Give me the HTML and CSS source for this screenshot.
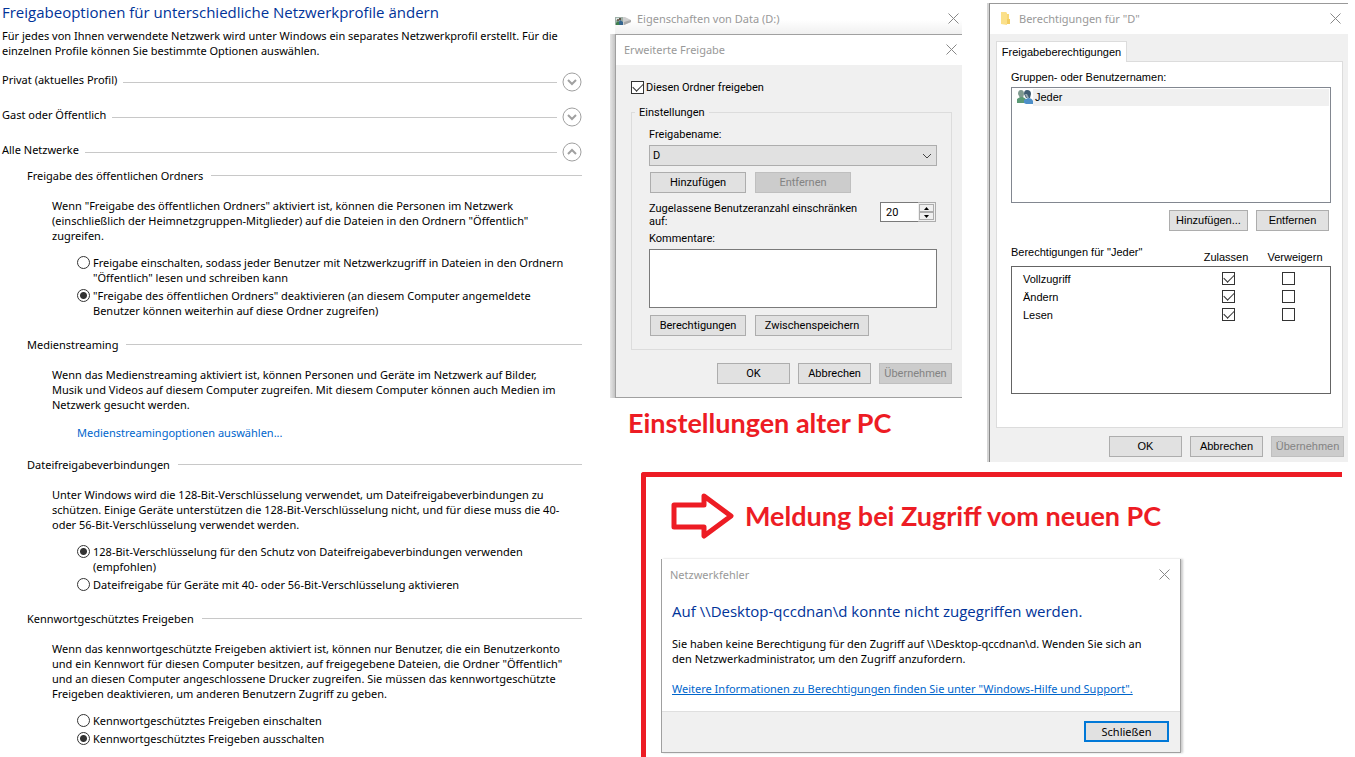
FILE: index.html
```html
<!DOCTYPE html>
<html lang="de">
<head>
  <meta charset="UTF-8">
  <meta name="viewport" content="width=device-width, initial-scale=1.0">
  <title>Netzwerkfreigabe</title>
  <link rel="stylesheet" href="styles.css">
</head>
<body>
  <main class="settings">
    <h1>Freigabeoptionen für unterschiedliche Netzwerkprofile ändern</h1>
    <p class="intro">Für jedes von Ihnen verwendete Netzwerk wird unter Windows ein separates Netzwerkprofil erstellt. Für die<br>einzelnen Profile können Sie bestimmte Optionen auswählen.</p>

    <div class="profile">
      <span>Privat (aktuelles Profil)</span>
      <button class="toggle" aria-label="Privat einblenden"><svg viewBox="0 0 20 20"><circle cx="10" cy="10" r="9"/><path d="M6 8l4 4 4-4"/></svg></button>
    </div>
    <div class="profile">
      <span>Gast oder Öffentlich</span>
      <button class="toggle" aria-label="Gast einblenden"><svg viewBox="0 0 20 20"><circle cx="10" cy="10" r="9"/><path d="M6 8l4 4 4-4"/></svg></button>
    </div>
    <div class="profile">
      <span>Alle Netzwerke</span>
      <button class="toggle" aria-label="Alle Netzwerke ausblenden"><svg viewBox="0 0 20 20"><circle cx="10" cy="10" r="9"/><path d="M6 12l4-4 4 4"/></svg></button>
    </div>

    <section class="option-group">
      <h2>Freigabe des öffentlichen Ordners</h2>
      <p>Wenn "Freigabe des öffentlichen Ordners" aktiviert ist, können die Personen im Netzwerk<br>(einschließlich der Heimnetzgruppen-Mitglieder) auf die Dateien in den Ordnern "Öffentlich"<br>zugreifen.</p>
      <div class="choices">
        <label><input type="radio" name="folder"><span>Freigabe einschalten, sodass jeder Benutzer mit Netzwerkzugriff in Dateien in den Ordnern<br>"Öffentlich" lesen und schreiben kann</span></label>
        <label><input type="radio" name="folder" checked><span>"Freigabe des öffentlichen Ordners" deaktivieren (an diesem Computer angemeldete<br>Benutzer können weiterhin auf diese Ordner zugreifen)</span></label>
      </div>
    </section>

    <section class="option-group">
      <h2>Medienstreaming</h2>
      <p>Wenn das Medienstreaming aktiviert ist, können Personen und Geräte im Netzwerk auf Bilder,<br>Musik und Videos auf diesem Computer zugreifen. Mit diesem Computer können auch Medien im<br>Netzwerk gesucht werden.</p>
      <a class="media-link" href="#">Medienstreamingoptionen auswählen...</a>
    </section>

    <section class="option-group">
      <h2>Dateifreigabeverbindungen</h2>
      <p>Unter Windows wird die 128-Bit-Verschlüsselung verwendet, um Dateifreigabeverbindungen zu<br>schützen. Einige Geräte unterstützen die 128-Bit-Verschlüsselung nicht, und für diese muss die 40-<br>oder 56-Bit-Verschlüsselung verwendet werden.</p>
      <div class="choices">
        <label><input type="radio" name="crypt" checked><span>128-Bit-Verschlüsselung für den Schutz von Dateifreigabeverbindungen verwenden<br>(empfohlen)</span></label>
        <label><input type="radio" name="crypt"><span>Dateifreigabe für Geräte mit 40- oder 56-Bit-Verschlüsselung aktivieren</span></label>
      </div>
    </section>

    <section class="option-group">
      <h2>Kennwortgeschütztes Freigeben</h2>
      <p>Wenn das kennwortgeschützte Freigeben aktiviert ist, können nur Benutzer, die ein Benutzerkonto<br>und ein Kennwort für diesen Computer besitzen, auf freigegebene Dateien, die Ordner "Öffentlich"<br>und an diesen Computer angeschlossene Drucker zugreifen. Sie müssen das kennwortgeschützte<br>Freigeben deaktivieren, um anderen Benutzern Zugriff zu geben.</p>
      <div class="choices">
        <label><input type="radio" name="password"><span>Kennwortgeschütztes Freigeben einschalten</span></label>
        <label><input type="radio" name="password" checked><span>Kennwortgeschütztes Freigeben ausschalten</span></label>
      </div>
    </section>
  </main>

  <div class="right">
    <div class="dialogs">
      <div class="old-pc">
        <div class="properties">
          <header class="titlebar">
            <svg class="drive-icon" viewBox="0 0 16 10"><path d="M6 1l4 0 6 3v2l-7 3H6z" fill="#cfcfcf"/><path d="M9 6l7-2v2l-7 3z" fill="#a9a9a9"/><path d="M0 1h8v8H0z" fill="#9fb0a8"/><path d="M1 2h3v2H1z" fill="#dbe6e4"/><circle cx="3" cy="4" r="1" fill="#5d4a38"/><path d="M1 9V7l2-2 2 2v2z" fill="#3f8050"/><circle cx="5" cy="3" r="1" fill="#4a3a2e"/><path d="M4 8V6l1-2 3 2v3H5z" fill="#35658f"/></svg>
            <span>Eigenschaften von Data (D:)</span>
            <button class="close" aria-label="Schließen"><svg viewBox="0 0 11 11"><path d="M0.500 0.500l10 10M10.500 0.500l-10 10"/></svg></button>
          </header>
          <div class="sharing">
            <header class="titlebar">
              <span>Erweiterte Freigabe</span>
              <button class="close" aria-label="Schließen"><svg viewBox="0 0 11 11"><path d="M0.500 0.500l10 10M10.500 0.500l-10 10"/></svg></button>
            </header>
            <div class="sharing-body">
              <label class="share-check"><input type="checkbox" checked>Diesen Ordner freigeben</label>
              <fieldset>
                <legend>Einstellungen</legend>
                <label for="share-name">Freigabename:</label>
                <select id="share-name"><option>D</option></select>
                <div class="button-row">
                  <button>Hinzufügen</button>
                  <button disabled>Entfernen</button>
                </div>
                <div class="limit">
                  <label for="user-limit">Zugelassene Benutzeranzahl einschränken<br>auf:</label>
                  <div class="spinner">
                    <input id="user-limit" type="text" value="20">
                    <div class="spin-buttons">
                      <button aria-label="Mehr"><svg viewBox="0 0 5 3"><path d="M0 3h5L2.500 0z"/></svg></button>
                      <button aria-label="Weniger"><svg viewBox="0 0 5 3"><path d="M0 0h5L2.500 3z"/></svg></button>
                    </div>
                  </div>
                </div>
                <label for="comments">Kommentare:</label>
                <textarea id="comments"></textarea>
                <div class="button-row">
                  <button>Berechtigungen</button>
                  <button class="wide">Zwischenspeichern</button>
                </div>
              </fieldset>
              <div class="dialog-buttons">
                <button>OK</button>
                <button>Abbrechen</button>
                <button disabled>Übernehmen</button>
              </div>
            </div>
          </div>
        </div>
        <p class="caption">Einstellungen alter PC</p>
      </div>

      <div class="permissions">
        <header class="titlebar">
          <svg class="folder-icon" viewBox="0 0 10 13"><path d="M0 0h5l1 1v12l-6-1z" fill="#fbe08a"/><path d="M6 7h3v5H6z" fill="#f3cd62"/><path d="M6 2h2v5H6z" fill="#f8d877"/></svg>
          <span>Berechtigungen für "D"</span>
          <button class="close" aria-label="Schließen"><svg viewBox="0 0 11 11"><path d="M0.500 0.500l10 10M10.500 0.500l-10 10"/></svg></button>
        </header>
        <div class="permissions-body">
          <button class="tab">Freigabeberechtigungen</button>
          <div class="tab-panel">
            <div class="list-label">Gruppen- oder Benutzernamen:</div>
            <ul class="user-list">
              <li>
                <svg class="users-icon" viewBox="0 0 16 14"><path d="M1 4q0-4 3-4t3 4l-1 4H3z" fill="#7f9a90"/><path d="M0 13V9q2-2 5-2 4 1 4 3v3z" fill="#5b9a76"/><path d="M7 4q0-4 3-4 4 0 4 4l-1 4H9z" fill="#3f5c72"/><path d="M8 4h2l2 4h-2z" fill="#9aaab2"/><path d="M7 13v-3l4-2q4 0 5 3v3H9z" fill="#4d8fc8"/></svg>
                <span>Jeder</span>
              </li>
            </ul>
            <div class="list-buttons">
              <button class="add">Hinzufügen...</button>
              <button>Entfernen</button>
            </div>
            <table>
              <thead>
                <tr><th>Berechtigungen für "Jeder"</th><th>Zulassen</th><th>Verweigern</th></tr>
              </thead>
              <tbody>
                <tr><td>Vollzugriff</td><td><input type="checkbox" checked aria-label="Vollzugriff zulassen"></td><td><input type="checkbox" aria-label="Vollzugriff verweigern"></td></tr>
                <tr><td>Ändern</td><td><input type="checkbox" checked aria-label="Ändern zulassen"></td><td><input type="checkbox" aria-label="Ändern verweigern"></td></tr>
                <tr><td>Lesen</td><td><input type="checkbox" checked aria-label="Lesen zulassen"></td><td><input type="checkbox" aria-label="Lesen verweigern"></td></tr>
              </tbody>
            </table>
          </div>
          <div class="dialog-buttons">
            <button>OK</button>
            <button>Abbrechen</button>
            <button disabled>Übernehmen</button>
          </div>
        </div>
      </div>
    </div>

    <div class="new-pc">
      <div class="message-title">
        <svg class="arrow" viewBox="0 0 64 48"><path d="M3 13h30V4l27 20-27 20v-9H3z"/></svg>
        <p class="caption">Meldung bei Zugriff vom neuen PC</p>
      </div>
      <div class="error">
        <header class="titlebar">
          <span>Netzwerkfehler</span>
          <button class="close" aria-label="Schließen"><svg viewBox="0 0 11 11"><path d="M0.500 0.500l10 10M10.500 0.500l-10 10"/></svg></button>
        </header>
        <div class="error-body">
          <h2>Auf \\Desktop-qccdnan\d konnte nicht zugegriffen werden.</h2>
          <p>Sie haben keine Berechtigung für den Zugriff auf \\Desktop-qccdnan\d. Wenden Sie sich an<br>den Netzwerkadministrator, um den Zugriff anzufordern.</p>
          <a href="#">Weitere Informationen zu Berechtigungen finden Sie unter "Windows-Hilfe und Support".</a>
        </div>
        <footer>
          <button>Schließen</button>
        </footer>
      </div>
    </div>
  </div>
</body>
</html>
```
FILE: styles.css
```css
* {
  box-sizing: border-box;
}

body {
  margin: 0;
  min-height: 100vh;
  display: grid;
  grid-template-columns: minmax(0, 610fr) minmax(0, 745fr);
  overflow: hidden;
  background-color: white;
  color: black;
  font-family: "Noto Sans", "Open Sans", sans-serif;
  font-size: 11px;
  line-height: 15px;
  white-space: nowrap;
}

h1, h2, p, ul {
  margin: 0;
  padding: 0;
  font-weight: normal;
}

button, input, select, textarea {
  margin: 0;
  padding: 0;
  font: inherit;
  color: inherit;
  border-radius: 0;
}

button {
  height: 21px;
  border: 1px solid #adadad;
  background-color: #e1e1e1;
}

button:disabled {
  border-color: #bfbfbf;
  background-color: #cccccc;
  color: #838383;
}

/* left side: network profiles */
.settings {
  padding: 2px 28px 0 2px;
}

.settings h1 {
  color: #003399;
  font-family: "Open Sans", sans-serif;
  font-size: 15px;
  line-height: 20px;
}

.intro {
  margin-top: 6px;
  margin-bottom: 14px;
}

.profile {
  display: flex;
  align-items: center;
  height: 20px;
  margin-bottom: 15px;
}

.profile span {
  padding-bottom: 5px;
}

.profile::before {
  content: "";
  order: 1;
  flex: 1;
  height: 1px;
  margin: 0 5px 0 6px;
  background-color: #c8c8c8;
}

.toggle {
  order: 2;
  width: 20px;
  height: 20px;
  border: none;
  background: none;
}

.toggle svg {
  display: block;
  fill: none;
  stroke: #a0a0a0;
}

.toggle path {
  stroke-width: 2;
}

.option-group {
  padding: 0 0 19px 25px;
}

.profile + .option-group {
  margin-top: -9px;
}

.option-group h2 {
  display: flex;
  align-items: center;
  font-size: 11px;
  line-height: 15px;
}

.option-group h2::after {
  content: "";
  flex: 1;
  height: 1px;
  margin-left: 8px;
  background-color: #c8c8c8;
}

.option-group p {
  margin: 15px 0 0 25px;
}

.choices {
  display: flex;
  flex-direction: column;
  gap: 3px;
  margin: 12px 0 0 50px;
}

.choices label {
  display: flex;
  align-items: flex-start;
  gap: 3px;
}

input[type="radio"] {
  appearance: none;
  flex: none;
  width: 13px;
  height: 13px;
  margin-top: 1px;
  border: 1px solid #333333;
  border-radius: 50%;
  background-color: white;
}

input[type="radio"]:checked {
  background-image: radial-gradient(circle, #333333 3px, transparent 4px);
}

.media-link {
  display: block;
  margin: 13px 0 -2px 50px;
  color: #0066cc;
  text-decoration: none;
}

/* right side */
.right {
  display: flex;
  flex-direction: column;
}

.dialogs {
  display: grid;
  grid-template-columns: minmax(0, 352fr) minmax(0, 361fr);
  gap: 25px;
  padding-right: 7px;
  height: 472px;
}

.titlebar {
  display: flex;
  align-items: center;
  background-color: white;
  color: #999999;
}

.close {
  width: 11px;
  height: 11px;
  margin-left: auto;
  border: none;
  background: none;
}

.close svg {
  display: block;
  fill: none;
  stroke: #888888;
}

.properties {
  padding-left: 5px;
  background: linear-gradient(to right, #e6e6e6, #c4c4c4) no-repeat left bottom / 5px 364px;
}

.properties > .titlebar {
  height: 34px;
  padding: 3px 3px 0 0;
  background: linear-gradient(white 20px, #f0f0f0);
}

.drive-icon {
  width: 16px;
  height: 10px;
  margin: 5px 6px 0 0;
}

.sharing {
  border: 1px solid #a0a0a0;
  border-right: none;
  background-color: #f0f0f0;
}

.sharing > .titlebar {
  height: 30px;
  padding: 0 5px 2px 8px;
}

.sharing-body {
  padding: 16px 10px 13px 15px;
  font-family: Roboto, sans-serif;
  line-height: 13px;
}

input[type="checkbox"] {
  appearance: none;
  flex: none;
  position: relative;
  width: 13px;
  height: 13px;
  border: 1px solid #333333;
  background-color: white;
}

input[type="checkbox"]:checked::after {
  content: "";
  position: absolute;
  left: 1px;
  top: 1px;
  width: 9px;
  height: 5px;
  border: solid #333333;
  border-width: 0 0 1px 1px;
  transform: rotate(-45deg);
}

.share-check {
  display: flex;
  gap: 2px;
  margin-bottom: 12px;
}

fieldset {
  margin: 0;
  padding: 9px 14px 13px 17px;
  border: 1px solid #dcdcdc;
}

legend {
  padding: 0 4px;
  margin-left: -14px;
}

fieldset label {
  display: block;
}

fieldset select {
  appearance: none;
  display: block;
  width: 100%;
  height: 21px;
  margin: 4px 0 6px;
  padding-left: 3px;
  border: 1px solid #adadad;
  background: #e1e1e1 url("data:image/svg+xml,%3Csvg xmlns='http://www.w3.org/2000/svg' width='9' height='6'%3E%3Cpath d='M0 1l4 4 4-4' fill='none' stroke='%23444'/%3E%3C/svg%3E") no-repeat right 4px center;
}

.button-row {
  display: flex;
  gap: 9px;
  padding-left: 1px;
}

.button-row button {
  width: 96px;
}

.button-row .wide {
  width: 114px;
}

.limit {
  display: flex;
  justify-content: space-between;
  align-items: flex-start;
  padding: 9px 1px 4px 0;
}

.spinner {
  display: flex;
  width: 56px;
  height: 20px;
}

.spinner input {
  width: 38px;
  padding-left: 5px;
  border: 1px solid #7a7a7a;
  border-right: none;
}

.spin-buttons {
  display: flex;
  flex: 1;
  flex-direction: column;
  padding: 1px;
  border: 1px solid #adadad;
  border-left: none;
}

.spin-buttons button {
  display: flex;
  flex: 1;
  align-items: center;
  justify-content: center;
  height: auto;
  background-color: #f0f0f0;
}

.spin-buttons svg {
  width: 5px;
  height: 3px;
}

textarea {
  display: block;
  width: 100%;
  height: 59px;
  margin: 4px 0 7px;
  border: 1px solid #7a7a7a;
  resize: none;
}

.dialog-buttons {
  display: flex;
  justify-content: flex-end;
  gap: 8px;
  margin-top: 13px;
}

.dialog-buttons button {
  width: 73px;
}

.caption {
  color: #ed1c24;
  font-family: Lato, sans-serif;
  font-size: 27px;
  font-weight: bold;
  line-height: 32px;
}

.old-pc .caption {
  margin: 9px 0 0 18px;
}

/* permissions window */
.permissions {
  align-self: start;
  margin: 3px 0 0 2px;
  border-top: 1px solid #999999;
  border-left: 1px solid #888888;
  background-color: #f0f0f0;
  box-shadow: -2px 0 #d4d4d4;
}

.permissions .titlebar {
  height: 30px;
  padding: 0 7px 1px 11px;
}

.folder-icon {
  width: 10px;
  height: 13px;
  margin-right: 8px;
}

.permissions-body {
  padding: 7px 4px 5px 6px;
  font-family: "Liberation Sans", Arial, sans-serif;
  line-height: 13px;
}

.tab {
  display: block;
  position: relative;
  width: 131px;
  height: 21px;
  margin-bottom: -1px;
  border: 1px solid #dcdcdc;
  border-bottom: none;
  background-color: white;
}

.tab-panel {
  height: 367px;
  margin-right: 1px;
  padding: 9px 11px 0 14px;
  border: 1px solid #dcdcdc;
  background-color: white;
}

.user-list {
  height: 116px;
  margin-top: 3px;
  padding: 1px;
  border: 1px solid #828790;
  list-style: none;
}

.user-list li {
  display: flex;
  padding-left: 4px;
}

.user-list span {
  flex: 1;
  padding: 2px;
  background-color: #f0f0f0;
}

.users-icon {
  width: 16px;
  height: 14px;
  margin-top: 1px;
}

.list-buttons {
  display: flex;
  justify-content: flex-end;
  gap: 8px;
  margin: 7px 2px 15px 0;
}

.list-buttons button {
  width: 73px;
}

.list-buttons .add {
  width: 79px;
}

table, thead, tbody {
  display: block;
}

tr {
  display: grid;
  height: 18px;
}

thead tr {
  grid-template-columns: 1fr 66px 72px;
  height: 20px;
}

tbody tr {
  grid-template-columns: 1fr 60px 48px;
}

th, td {
  padding: 0;
  font-weight: normal;
  text-align: left;
}

th + th {
  padding-top: 5px;
  text-align: center;
}

tbody {
  height: 128px;
  padding: 5px 0 0 11px;
  border: 1px solid #646464;
}

td:first-child {
  padding-top: 1px;
}

.permissions .dialog-buttons {
  margin-top: 8px;
}

/* message on the new pc */
.new-pc {
  flex: 1;
  margin: 0 13px 0 31px;
  border-top: 5px solid #ed1c24;
  border-left: 5px solid #ed1c24;
  border-top-left-radius: 3px;
}

.message-title {
  display: flex;
  align-items: center;
  gap: 10px;
  height: 77px;
  padding-left: 25px;
}

.arrow {
  width: 64px;
  height: 48px;
  fill: none;
  stroke: #ed1c24;
  stroke-width: 5;
  stroke-linejoin: round;
}

.error {
  margin: 5px 161px 0 15px;
  border: 1px solid #a0a0a0;
  border-top: none;
  box-shadow: 2px 0 2px #cccccc;
}

.error .titlebar {
  height: 30px;
  padding: 0 10px 0 8px;
}

.error-body {
  padding: 12px 10px 15px;
}

.error-body h2 {
  color: #003399;
  font-family: "Open Sans", sans-serif;
  font-size: 15px;
  line-height: 20px;
}

.error-body p {
  margin: 15px 0;
}

.error-body a {
  color: #0066cc;
}

.error footer {
  display: flex;
  justify-content: flex-end;
  padding: 9px 11px 10px;
  border-top: 1px solid #dfdfdf;
  background-color: #f0f0f0;
}

.error footer button {
  width: 85px;
  border: 2px solid #0078d7;
}
```
